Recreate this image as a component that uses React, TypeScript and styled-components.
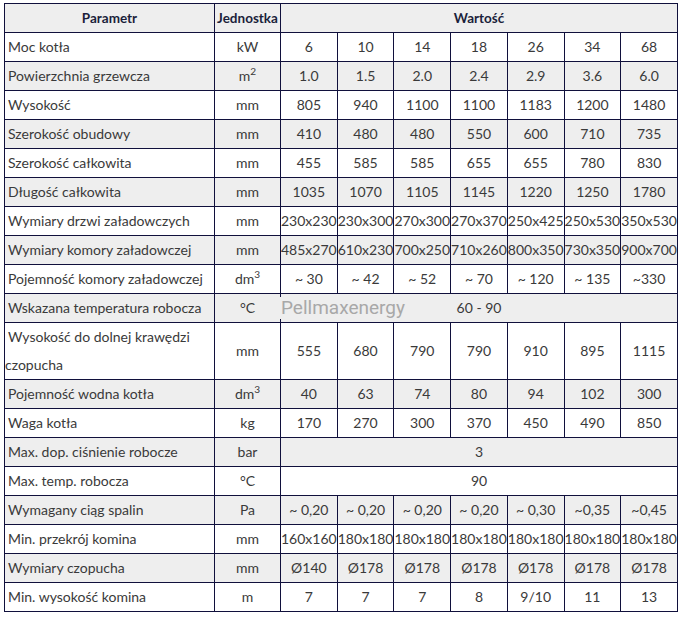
import styled, { createGlobalStyle } from "styled-components"

const GlobalStyle = createGlobalStyle`
  html, body {
    margin: 0;
    padding: 0;
    background: #fff;
  }
`

const Page = styled.div`
  padding: 3px 0 0 4px;
`

const Table = styled.table`
  width: 674px;
  table-layout: fixed;
  border-collapse: collapse;
  border: 1px solid #10103c;
  font-family: Lato, "Noto Sans", sans-serif;
  font-size: 14px;
  color: #3a3a3a;
`

const Row = styled.tr`
  &:nth-child(even) {
    background: #eeeeee;
  }
`

const HeadRow = styled.tr`
  background: #eeeeee;
`

const Head = styled.th`
  border: 1px solid #10103c;
  padding: 0;
  height: 28px;
  line-height: 28px;
  font-size: 13.5px;
  font-weight: 700;
  color: #1b1f3b;
  text-align: center;
  white-space: nowrap;
`

const Cell = styled.td<{ $name?: boolean }>`
  position: relative;
  border: 1px solid #10103c;
  padding: 0;
  height: 28px;
  line-height: 28px;
  text-align: ${({ $name }) => ($name ? "left" : "center")};
  text-indent: ${({ $name }) => ($name ? "3px" : "0")};
  white-space: ${({ $name }) => ($name ? "normal" : "nowrap")};
  overflow: visible;

  sup {
    font-size: 0.72em;
    line-height: 0;
    vertical-align: 0.55em;
  }
`

const Watermark = styled.span`
  position: absolute;
  left: -1px;
  top: 3px;
  padding: 0 1px;
  background: #eeeeee;
  font-family: Roboto, "Liberation Sans", sans-serif;
  font-size: 19px;
  line-height: 22px;
  color: #a8a8a8;
  text-indent: 0;
`

type Spec = {
  name: string
  unit: React.ReactNode
  values?: string[]
  common?: string
  mark?: boolean
}

const rows: Spec[] = [
  { name: "Moc kotła", unit: "kW", values: ["6", "10", "14", "18", "26", "34", "68"] },
  { name: "Powierzchnia grzewcza", unit: <>m<sup>2</sup></>, values: ["1.0", "1.5", "2.0", "2.4", "2.9", "3.6", "6.0"] },
  { name: "Wysokość", unit: "mm", values: ["805", "940", "1100", "1100", "1183", "1200", "1480"] },
  { name: "Szerokość obudowy", unit: "mm", values: ["410", "480", "480", "550", "600", "710", "735"] },
  { name: "Szerokość całkowita", unit: "mm", values: ["455", "585", "585", "655", "655", "780", "830"] },
  { name: "Długość całkowita", unit: "mm", values: ["1035", "1070", "1105", "1145", "1220", "1250", "1780"] },
  { name: "Wymiary drzwi załadowczych", unit: "mm", values: ["230x230", "230x300", "270x300", "270x370", "250x425", "250x530", "350x530"] },
  { name: "Wymiary komory załadowczej", unit: "mm", values: ["485x270", "610x230", "700x250", "710x260", "800x350", "730x350", "900x700"] },
  { name: "Pojemność komory załadowczej", unit: <>dm<sup>3</sup></>, values: ["~ 30", "~ 42", "~ 52", "~ 70", "~ 120", "~ 135", "~330"] },
  { name: "Wskazana temperatura robocza", unit: "°C", common: "60 - 90", mark: true },
  { name: "Wysokość do dolnej krawędzi czopucha", unit: "mm", values: ["555", "680", "790", "790", "910", "895", "1115"] },
  { name: "Pojemność wodna kotła", unit: <>dm<sup>3</sup></>, values: ["40", "63", "74", "80", "94", "102", "300"] },
  { name: "Waga kotła", unit: "kg", values: ["170", "270", "300", "370", "450", "490", "850"] },
  { name: "Max. dop. ciśnienie robocze", unit: "bar", common: "3" },
  { name: "Max. temp. robocza", unit: "°C", common: "90" },
  { name: "Wymagany ciąg spalin", unit: "Pa", values: ["~ 0,20", "~ 0,20", "~ 0,20", "~ 0,20", "~ 0,30", "~0,35", "~0,45"] },
  { name: "Min. przekrój komina", unit: "mm", values: ["160x160", "180x180", "180x180", "180x180", "180x180", "180x180", "180x180"] },
  { name: "Wymiary czopucha", unit: "mm", values: ["Ø140", "Ø178", "Ø178", "Ø178", "Ø178", "Ø178", "Ø178"] },
  { name: "Min. wysokość komina", unit: "m", values: ["7", "7", "7", "8", "9/10", "11", "13"] },
]

export default function App() {
  return (
    <Page>
      <GlobalStyle />
      <Table>
        <colgroup>
          <col style={{ width: 210 }} />
          <col style={{ width: 66 }} />
          {Array.from({ length: 7 }).map((_, i) => <col key={i} />)}
        </colgroup>
        <thead>
          <HeadRow>
            <Head>Parametr</Head>
            <Head>Jednostka</Head>
            <Head colSpan={7}>Wartość</Head>
          </HeadRow>
        </thead>
        <tbody>
          {rows.map((r) => (
            <Row key={r.name}>
              <Cell $name>{r.name}</Cell>
              <Cell>{r.unit}</Cell>
              {r.common !== undefined ? (
                <Cell colSpan={7}>
                  {r.mark && <Watermark>Pellmaxenergy</Watermark>}
                  {r.common}
                </Cell>
              ) : (
                r.values!.map((v, i) => <Cell key={i}>{v}</Cell>)
              )}
            </Row>
          ))}
        </tbody>
      </Table>
    </Page>
  )
}
